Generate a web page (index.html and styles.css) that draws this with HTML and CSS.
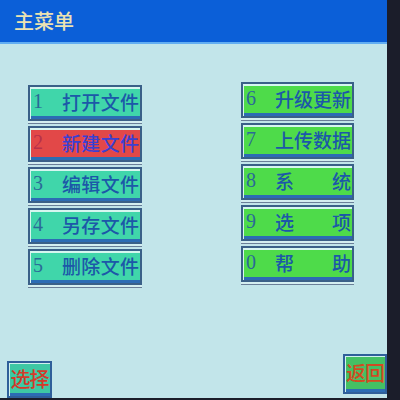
FILE: index.html
```html
<!DOCTYPE html>
<html lang="zh-CN">
<head>
<meta charset="utf-8">
<title>主菜单</title>
<link rel="stylesheet" href="styles.css">
</head>
<body>
<div class="device">
  <div class="screen">
    <div class="header">主菜单</div>
    <div class="menu">
      <div class="col col-left">
        <div class="btn teal"><span class="num">1</span><span class="label"><span>打</span><span>开</span><span>文</span><span>件</span></span></div>
        <div class="btn red"><span class="num">2</span><span class="label"><span>新</span><span>建</span><span>文</span><span>件</span></span></div>
        <div class="btn teal"><span class="num">3</span><span class="label"><span>编</span><span>辑</span><span>文</span><span>件</span></span></div>
        <div class="btn teal"><span class="num">4</span><span class="label"><span>另</span><span>存</span><span>文</span><span>件</span></span></div>
        <div class="btn teal"><span class="num">5</span><span class="label"><span>删</span><span>除</span><span>文</span><span>件</span></span></div>
      </div>
      <div class="col col-right">
        <div class="btn green"><span class="num">6</span><span class="label"><span>升</span><span>级</span><span>更</span><span>新</span></span></div>
        <div class="btn green"><span class="num">7</span><span class="label"><span>上</span><span>传</span><span>数</span><span>据</span></span></div>
        <div class="btn green"><span class="num">8</span><span class="label"><span>系</span><span>统</span></span></div>
        <div class="btn green"><span class="num">9</span><span class="label"><span>选</span><span>项</span></span></div>
        <div class="btn green"><span class="num">0</span><span class="label"><span>帮</span><span>助</span></span></div>
      </div>
    </div>
    <div class="footer">
      <div class="soft soft-left">选择</div>
      <div class="soft soft-right">返回</div>
    </div>
  </div>
  <div class="bezel"></div>
</div>
</body>
</html>
```
FILE: styles.css
```css
html, body {
  margin: 0;
  padding: 0;
}
body {
  width: 400px;
  height: 400px;
  overflow: hidden;
  background: #1b1d2a;
  font-family: "Noto Sans CJK SC", "Noto Sans", sans-serif;
}
.device {
  display: flex;
  width: 400px;
  height: 400px;
}
.screen {
  width: 387px;
  height: 398px;
  background: #c2e5ea;
  display: flex;
  flex-direction: column;
}
.bezel {
  flex: 1;
  background: #1b1d2a;
}
.header {
  height: 42px;
  line-height: 42px;
  background: #0b5fd8;
  border-bottom: 2px solid #62aef2;
  padding-left: 14px;
  color: #ebe3b2;
  font-size: 20px;
  font-weight: 500;
}
.menu {
  display: grid;
  grid-template-columns: 114px 113px;
  column-gap: 99px;
  padding-left: 28px;
  padding-top: 41px;
}
.col {
  display: flex;
  flex-direction: column;
  gap: 5px;
}
.col-right {
  margin-top: -3px;
}
.btn {
  height: 36px;
  box-sizing: border-box;
  border: 2px solid #3a6088;
  display: flex;
  align-items: center;
  padding: 0 1px 3px 3px;
  box-shadow: inset 1px 2px 0 #d6f6f0, inset 0 -3px 0 #2c6cb4, 0 2px 0 #d4eef0, 0 3px 0 #6a7f98;
  color: #1c58a8;
}
.teal { background: #40d6aa; }
.green { background: #4edb4a; }
.red { background: #e24848; color: #3a40d2; }
.num {
  width: 29px;
  font-family: "Liberation Serif", serif;
  font-size: 20px;
  color: #2a6a98;
}
.red .num { color: #b8304a; }
.label {
  flex: 1;
  display: flex;
  justify-content: space-between;
  font-size: 19px;
  line-height: 24px;
  font-weight: 500;
}
.footer {
  margin-top: auto;
  display: flex;
  justify-content: space-between;
  align-items: flex-end;
  padding: 0 0 0 7px;
}
.soft {
  box-sizing: border-box;
  border: 2px solid #2f5f9a;
  box-shadow: inset 1px 1px 0 #d0f2ee, inset 0 -3px 0 #2c6cb4;
  color: #d43a2a;
  font-size: 20px;
  line-height: 28px;
  text-align: center;
  letter-spacing: -1px;
  font-weight: 500;
}
.soft-left {
  width: 45px;
  height: 37px;
  background: #3ec8a4;
  padding-top: 2px;
}
.soft-right {
  width: 44px;
  height: 40px;
  background: #44c064;
  margin-bottom: 4px;
  padding-top: 3px;
  color: #d24a22;
}
```
